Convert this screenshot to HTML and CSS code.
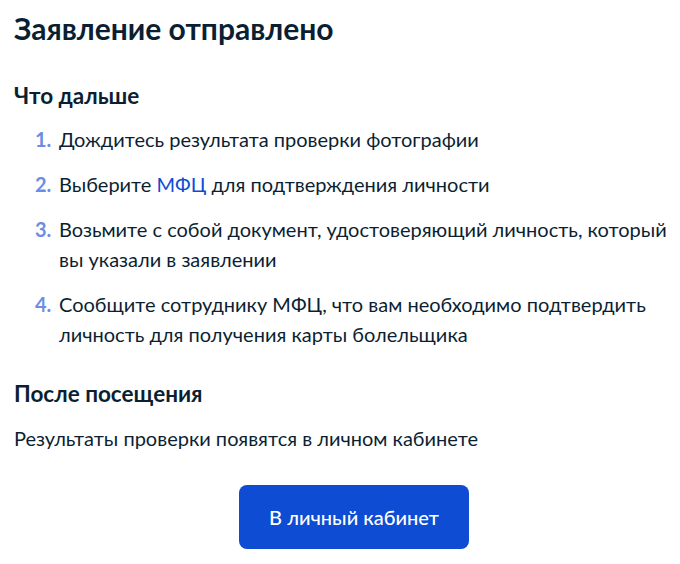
FILE: index.html
```html
<!DOCTYPE html>
<html lang="ru">
<head>
<meta charset="utf-8">
<link rel="stylesheet" href="styles.css">
</head>
<body>
<main class="page">
  <h1 class="title">Заявление отправлено</h1>
  <h2 class="subtitle">Что дальше</h2>
  <ol class="steps">
    <li><span class="num">1.</span><span class="txt">Дождитесь результата проверки фотографии</span></li>
    <li><span class="num">2.</span><span class="txt">Выберите <a class="link" href="#">МФЦ</a> для подтверждения личности</span></li>
    <li><span class="num">3.</span><span class="txt">Возьмите с собой документ, удостоверяющий личность, который вы указали в заявлении</span></li>
    <li><span class="num">4.</span><span class="txt">Сообщите сотруднику МФЦ, что вам необходимо подтвердить личность для получения карты болельщика</span></li>
  </ol>
  <h2 class="subtitle after">После посещения</h2>
  <p class="text">Результаты проверки появятся в личном кабинете</p>
  <div class="actions">
    <button class="btn">В личный кабинет</button>
  </div>
</main>
</body>
</html>
```
FILE: styles.css
```css
* { box-sizing: border-box; }
html, body { margin: 0; padding: 0; background: #fff; }
body {
  font-family: Lato, "Noto Sans", sans-serif;
  color: #0b1f33;
}
.page { padding: 10px 4px 0 14px; }
.title {
  margin: 0;
  font-size: 30px;
  line-height: 36px;
  font-weight: 700;
}
.subtitle {
  margin: 35px 0 0 0;
  font-size: 22.5px;
  line-height: 30px;
  font-weight: 700;
}
.steps {
  list-style: none;
  margin: 13px 0 0 0;
  padding: 0 0 0 21px;
  display: flex;
  flex-direction: column;
  gap: 15px;
}
.steps li {
  display: flex;
  font-size: 20px;
  line-height: 30px;
}
.num {
  color: #6d8de5;
  font-weight: 700;
  width: 24px;
  flex: none;
}
.link { color: #0d4cd3; text-decoration: none; }
.after { margin-top: 30px; }
.text {
  margin: 14px 0 0 0;
  font-size: 20px;
  line-height: 30px;
}
.actions {
  display: flex;
  justify-content: center;
  margin-top: 32px;
  padding-left: 18px;
}
.btn {
  width: 230px;
  height: 64px;
  border: none;
  border-radius: 8px;
  background: #0d4cd3;
  color: #fff;
  font-family: Lato, "Noto Sans", sans-serif;
  font-size: 20px;
  font-weight: 500;
}
```
